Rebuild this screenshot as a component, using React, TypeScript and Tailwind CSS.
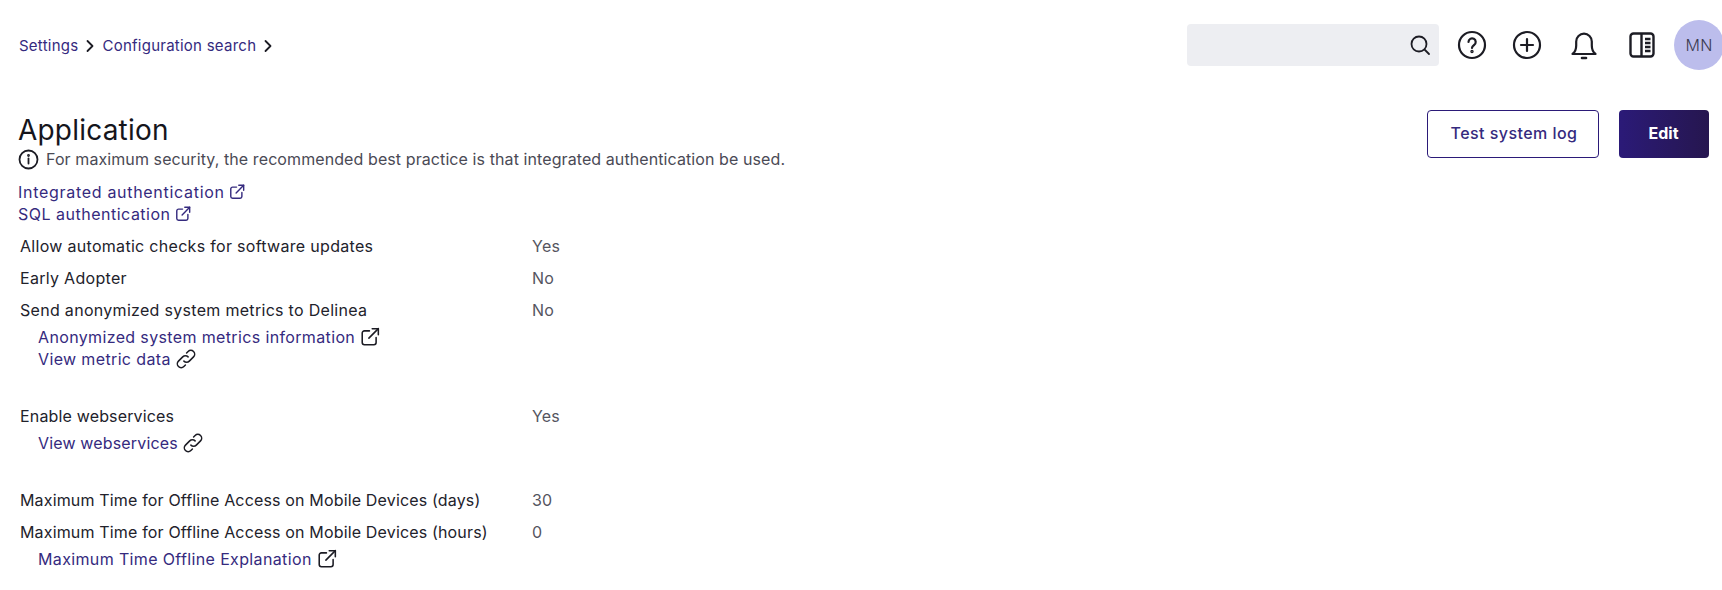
import React from "react";

const font = { fontFamily: '"Inter", "Noto Sans", sans-serif' };

function ExternalIcon({ size = 20, sw = 1.4, color = "#1c1c24" }: { size?: number; sw?: number; color?: string }) {
  return (
    <svg width={size} height={size} viewBox="0 0 18 18" fill="none" stroke={color} strokeWidth={sw} strokeLinecap="round" strokeLinejoin="round">
      <path d="M8.500 3.500H4a2 2 0 0 0-2 2V14a2 2 0 0 0 2 2h8.500a2 2 0 0 0 2-2V9.500" />
      <path d="M16.500 1.500 8 10" />
      <path d="M11 1.500h5.500V7" />
    </svg>
  );
}

function ChainIcon() {
  return (
    <svg width="20" height="20" viewBox="1.500 1.500 17 17" fill="none" stroke="#1c1c24" strokeWidth="1.300" strokeLinecap="round">
      <path d="M8.200 11.800a3.200 3.200 0 0 0 4.600 0l3.600-3.600a3.250 3.250 0 0 0-4.600-4.600l-1.300 1.300" />
      <path d="M11.800 8.200a3.200 3.200 0 0 0-4.600 0l-3.600 3.600a3.250 3.250 0 0 0 4.600 4.600l1.300-1.300" />
    </svg>
  );
}

function Chevron() {
  return (
    <svg width="16" height="16" viewBox="0 0 16 16" fill="none" stroke="#1c1c24" strokeWidth="1.800" strokeLinecap="round" strokeLinejoin="round">
      <path d="M5.500 3 10.500 8l-5 5" />
    </svg>
  );
}

function Row({ label, value, tight }: { label: string; value: string; tight?: boolean }) {
  return (
    <div className={tight ? "flex h-8 items-center text-[16px] tracking-[0.16px] text-[#22222b]" : "flex h-8 items-center text-[16px] tracking-[0.3px] text-[#22222b]"}>
      <div className="w-[514px] pl-[2px]">{label}</div>
      <div className="text-[#55555f]">{value}</div>
    </div>
  );
}

function SubLink({ text, chain, tight }: { text: string; chain?: boolean; tight?: boolean }) {
  return (
    <a className={tight ? "flex h-[22px] items-center gap-[5px] pl-[20px] text-[16px] tracking-[0.16px] text-[#352a7e]" : "flex h-[22px] items-center gap-[5px] pl-[20px] text-[16px] tracking-[0.36px] text-[#352a7e]"}>
      <span>{text}</span>
      {chain ? <ChainIcon /> : <ExternalIcon />}
    </a>
  );
}

export default function App() {
  return (
    <div style={font} className="h-[590px] w-[1722px] overflow-hidden bg-white text-[#1c1c24]">
      <header className="flex h-[90px] items-center justify-between">
        <nav className="flex items-center gap-[4px] pt-[2px] pl-[19px] text-[15px] tracking-[0.25px] text-[#352a7e]">
          <span>Settings</span>
          <Chevron />
          <span>Configuration search</span>
          <Chevron />
        </nav>
        <div className="flex items-center">
          <div className="flex h-[42px] w-[252px] items-center justify-end rounded-[4px] bg-[#edeef2] pr-[7px]">
            <svg width="24" height="24" viewBox="0 0 24 24" fill="none" stroke="#1c1c24" strokeWidth="1.800" strokeLinecap="round">
              <circle cx="11" cy="11" r="7.500" />
              <path d="m17 17 4 4" />
            </svg>
          </div>
          <div className="ml-[18px] flex w-[30px] justify-center">
            <svg width="30" height="30" viewBox="0 0 30 30" fill="none" stroke="#1c1c24" strokeWidth="2.200" strokeLinecap="round">
              <circle cx="15" cy="15" r="13" />
              <path d="M11.500 12a3.600 3.600 0 1 1 5.600 3c-1.300.9-2.100 1.500-2.100 3" />
              <circle cx="15" cy="21.500" r="0.600" fill="#1c1c24" />
            </svg>
          </div>
          <div className="ml-[25px] flex w-[30px] justify-center">
            <svg width="30" height="30" viewBox="0 0 30 30" fill="none" stroke="#1c1c24" strokeWidth="2.200" strokeLinecap="round">
              <circle cx="15" cy="15" r="13" />
              <path d="M15 9v12M9 15h12" />
            </svg>
          </div>
          <div className="ml-[28px] flex w-[28px] justify-center">
            <svg width="28" height="30" viewBox="0 0 28 30" fill="none" stroke="#1c1c24" strokeWidth="2.200" strokeLinecap="round" strokeLinejoin="round">
              <path d="M2.500 24c2.700-2 3.700-4 3.700-8.500V11.500a7.800 7.800 0 0 1 15.600 0v4c0 4.500 1 6.500 3.700 8.500z" />
              <path d="M12 28h4" strokeWidth="2.600" />
            </svg>
          </div>
          <div className="ml-[30px] flex w-[28px] justify-center">
            <svg width="28" height="28" viewBox="0 0 28 28" fill="none" stroke="#1c1c24" strokeWidth="2.400" strokeLinejoin="round">
              <rect x="2.500" y="2.500" width="23" height="23" rx="3" />
              <path d="M13.500 2.500v23" />
              <path d="M17 8h5.500M17 12h5.500M17 16h5.500M17 20h5.500" />
            </svg>
          </div>
          <div className="ml-[18px] flex h-[50px] w-[48px] items-center overflow-hidden">
            <div className="flex h-[50px] w-[50px] shrink-0 items-center justify-center rounded-full bg-[#bcbdec] text-[16px] font-light tracking-[0.3px] text-[#3a3a50]">MN</div>
          </div>
        </div>
      </header>
      <main className="flex items-start justify-between pr-[13px] pl-[18px]">
        <div>
          <h1 className="mt-[22px] text-[28px] leading-[36px] font-normal tracking-[0.2px] text-[#15151c]">Application</h1>
          <div className="flex h-[22px] items-center gap-[7px] text-[16px] tracking-[0.09px] text-[#4a4a55]">
            <svg width="21" height="21" viewBox="0 0 21 21" fill="none" stroke="#1c1c24" strokeWidth="1.800" strokeLinecap="round">
              <circle cx="10.500" cy="10.500" r="9" />
              <path d="M10.500 9.500v5" />
              <circle cx="10.500" cy="6.500" r="0.500" fill="#1c1c24" />
            </svg>
            <span>For maximum security, the recommended best practice is that integrated authentication be used.</span>
          </div>
          <div className="mt-[11px] flex h-[22px] items-center gap-[4px] text-[16px] tracking-[0.7px] text-[#352a7e]">
            <span>Integrated authentication</span>
            <ExternalIcon size={16} sw={1.600} color="#352a7e" />
          </div>
          <div className="flex h-[22px] items-center gap-[4px] text-[16px] tracking-[0.5px] text-[#352a7e]">
            <span>SQL authentication</span>
            <ExternalIcon size={16} sw={1.600} color="#352a7e" />
          </div>
          <div className="mt-[5px]">
            <Row label="Allow automatic checks for software updates" value="Yes" />
            <Row label="Early Adopter" value="No" />
            <Row label="Send anonymized system metrics to Delinea" value="No" />
            <SubLink text="Anonymized system metrics information" />
            <SubLink text="View metric data" chain />
            <div className="h-[30px]" />
            <Row label="Enable webservices" value="Yes" tight />
            <SubLink text="View webservices" chain tight />
            <div className="h-[30px]" />
            <Row label="Maximum Time for Offline Access on Mobile Devices (days)" value="30" tight />
            <Row label="Maximum Time for Offline Access on Mobile Devices (hours)" value="0" tight />
            <SubLink text="Maximum Time Offline Explanation" />
          </div>
        </div>
        <div className="mt-[20px] flex gap-[20px]">
          <button className="h-[48px] w-[172px] rounded-[4px] border border-[#2b1a78] bg-white pb-[2px] pl-[2px] text-[16px] font-medium tracking-[0.45px] text-[#352a7e]">Test system log</button>
          <button className="h-[48px] w-[90px] rounded-[4px] bg-gradient-to-r from-[#2b1a78] to-[#26164f] pr-[1px] pb-[2px] text-[16px] font-bold text-white">Edit</button>
        </div>
      </main>
    </div>
  );
}
